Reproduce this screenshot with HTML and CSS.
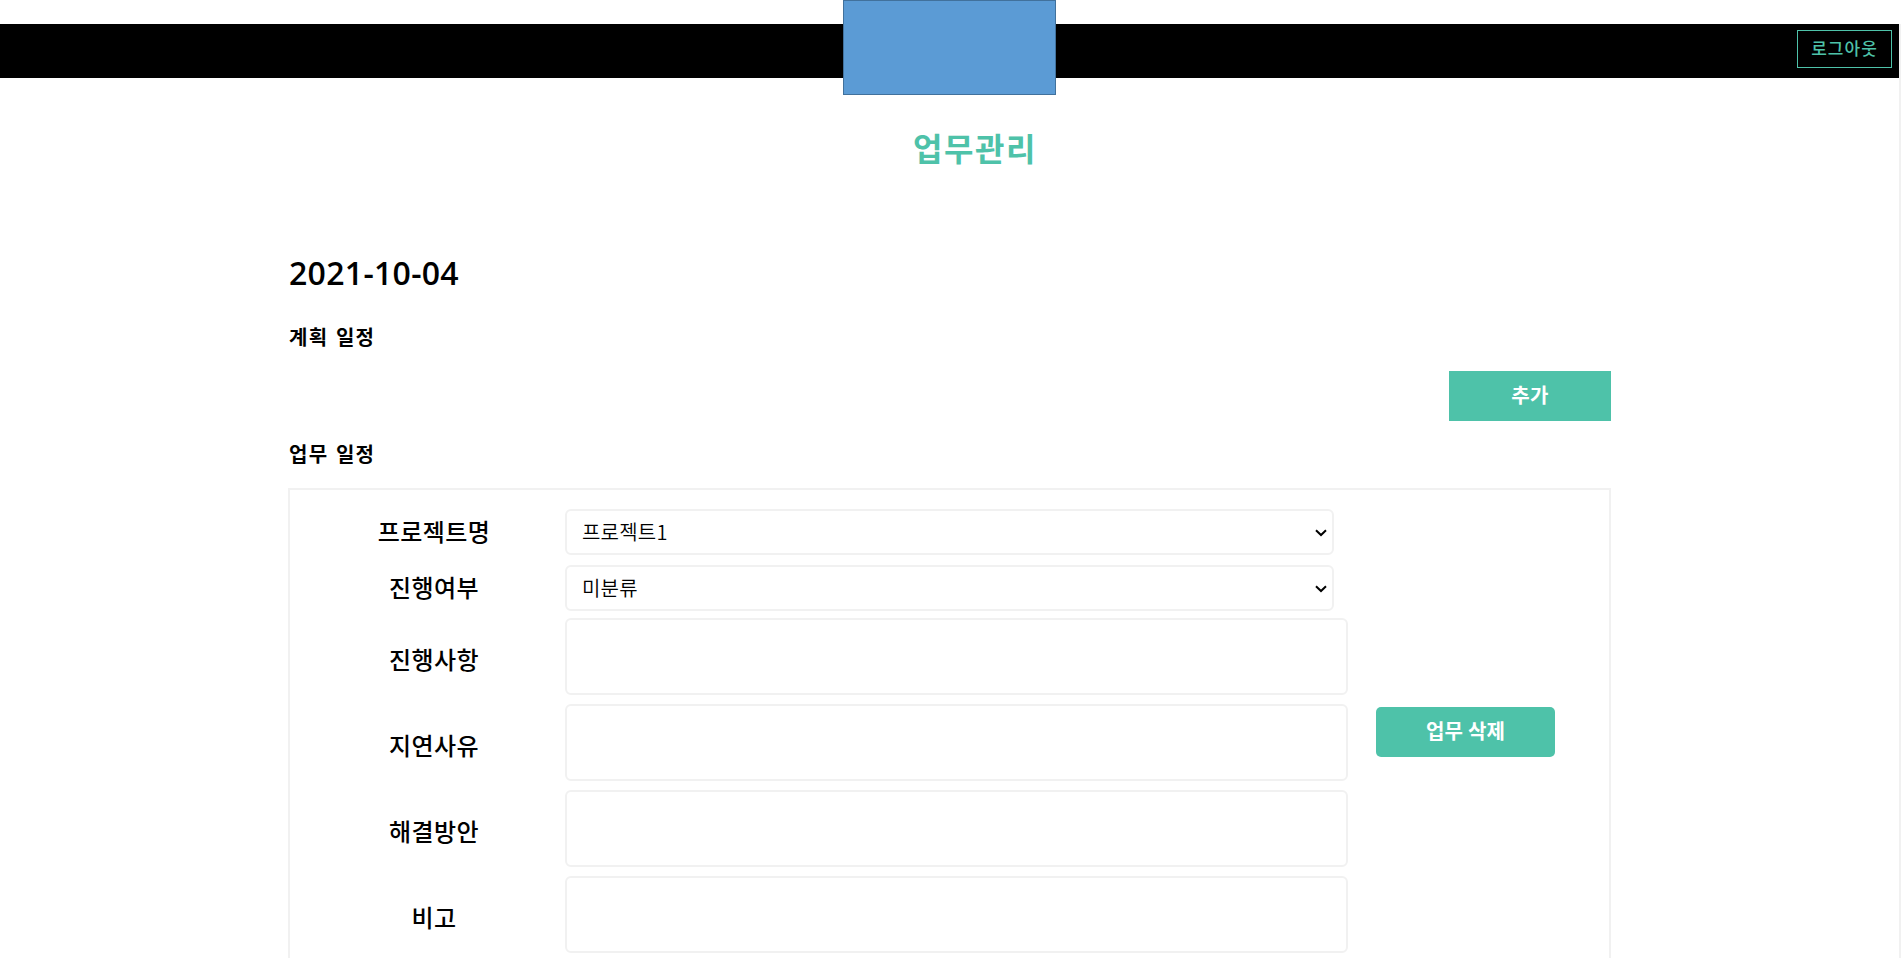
FILE: index.html
```html
<!DOCTYPE html>
<html lang="ko">
<head>
  <meta charset="UTF-8" />
  <meta name="viewport" content="width=device-width, initial-scale=1.0"/>
  <title>업무관리</title>
  <link rel="stylesheet" href="styles.css">
</head>
<body>
  <div class="page">
    <!-- Header -->
    <header class="top-bar">
      <div class="logo"></div>
      <button class="logout-btn">로그아웃</button>
    </header>

    <h1 class="page-title">업무관리</h1>

    <main class="container">
      <h2 class="date">2021-10-04</h2>

      <h3 class="section-title">계획 일정</h3>
      <div class="btn-row">
        <button class="btn add-btn">추가</button>
      </div>

      <h3 class="section-title">업무 일정</h3>
      <div class="work-card">
        <div class="fields">
          <div class="field select-field">
            <label for="project">프로젝트명</label>
            <div class="select-wrap">
              <select id="project">
                <option>프로젝트1</option>
              </select>
              <svg class="arrow" width="12" height="8" viewBox="0 0 12 8"><path d="M1 1.2 L6 6 L11 1.2" fill="none" stroke="#000" stroke-width="2"/></svg>
            </div>
          </div>
          <div class="field select-field">
            <label for="status">진행여부</label>
            <div class="select-wrap">
              <select id="status">
                <option>미분류</option>
              </select>
              <svg class="arrow" width="12" height="8" viewBox="0 0 12 8"><path d="M1 1.2 L6 6 L11 1.2" fill="none" stroke="#000" stroke-width="2"/></svg>
            </div>
          </div>
          <div class="field text-field">
            <label for="progress">진행사항</label>
            <textarea id="progress"></textarea>
          </div>
          <div class="field text-field">
            <label for="delay">지연사유</label>
            <textarea id="delay"></textarea>
          </div>
          <div class="field text-field">
            <label for="solution">해결방안</label>
            <textarea id="solution"></textarea>
          </div>
          <div class="field text-field">
            <label for="note">비고</label>
            <textarea id="note"></textarea>
          </div>
        </div>
        <div class="card-side">
          <button class="btn delete-btn">업무 삭제</button>
        </div>
      </div>
    </main>
  </div>
</body>
</html>
```

FILE: styles.css
```css
:root {
  --main: #4ec2a9;
  --line: #f1f1f1;
}

* { box-sizing: border-box; }

html, body { height: 100%; }

body {
  margin: 0;
  padding-top: 24px;
  overflow: hidden;
  background: #fff;
  color: #000;
  font-family: "Open Sans", "Noto Sans CJK KR", sans-serif;
}

.page {
  height: 100%;
  border-right: 2px solid var(--line);
}

h1, h2, h3 { margin: 0; }

button, select, textarea {
  margin: 0;
  font-family: inherit;
}

/* Header */
.top-bar {
  position: relative;
  display: flex;
  align-items: center;
  justify-content: flex-end;
  height: 54px;
  padding: 0 7px 4px 0;
  background: #000;
}

.logo {
  position: absolute;
  top: -24px;
  left: 50%;
  width: 213px;
  height: 95px;
  margin-left: -106.5px;
  background: #5b9bd5;
  border: 1px solid #41719c;
}

.logout-btn {
  width: 95px;
  height: 38px;
  padding: 0;
  border: 1px solid var(--main);
  background: transparent;
  color: var(--main);
  font-size: 17px;
  font-weight: 500;
  letter-spacing: 1px;
  line-height: 36px;
}

.page-title {
  margin-top: 49px;
  padding-left: 51px;
  color: var(--main);
  font-size: 32px;
  font-weight: 600;
  letter-spacing: 1.5px;
  line-height: 44px;
  text-align: center;
}

.container {
  width: 1323px;
  margin: 80px auto 0;
}

.date {
  padding-left: 1px;
  font-size: 32px;
  font-weight: 650;
  letter-spacing: 0.3px;
  line-height: 44px;
}

.section-title {
  padding: 1px 0 1px 1px;
  font-size: 20px;
  font-weight: 600;
  letter-spacing: 1.3px;
  word-spacing: 1px;
  line-height: 28px;
}

.date + .section-title { margin-top: 28px; }

.btn-row {
  display: flex;
  justify-content: flex-end;
  margin: 18px 0 19px;
}

.btn {
  height: 50px;
  padding: 0;
  border: none;
  background: var(--main);
  color: #fff;
  font-size: 20px;
  font-weight: 600;
  line-height: 50px;
}

.add-btn {
  width: 162px;
  letter-spacing: 0.4px;
}

.delete-btn {
  width: 179px;
  border-radius: 5px;
}

/* Work form */
.work-card {
  display: flex;
  height: 490px;
  margin-top: 18px;
  padding-top: 19px;
  border: 2px solid var(--line);
}

.fields {
  display: flex;
  flex-direction: column;
  gap: 9px;
  width: 1058px;
}

.field {
  display: flex;
  align-items: center;
}

.select-field { height: 46px; }
.select-field + .select-field { margin: 1px 0 -2px; }

.field label {
  width: 275px;
  padding-left: 13px;
  font-size: 24px;
  font-weight: 500;
  letter-spacing: 0.4px;
  line-height: 36px;
  text-align: center;
}

.text-field label { padding-top: 6px; }

.field select, .field textarea {
  border: 2px solid var(--line);
  border-radius: 6px;
  background: transparent;
  color: #000;
  font-family: "Noto Sans CJK KR", sans-serif;
  font-size: 20px;
  font-weight: 350;
}

.select-wrap {
  position: relative;
  height: 46px;
}

.field select {
  appearance: none;
  width: 769px;
  height: 46px;
  padding: 0 0 2px 15px;
  letter-spacing: 0.2px;
}

.arrow {
  position: absolute;
  top: 20px;
  right: 7px;
  pointer-events: none;
}

.field textarea {
  width: 783px;
  height: 77px;
  resize: none;
}

.card-side {
  flex: 1;
  display: flex;
  align-items: flex-start;
  padding: 198px 0 0 28px;
}
```
